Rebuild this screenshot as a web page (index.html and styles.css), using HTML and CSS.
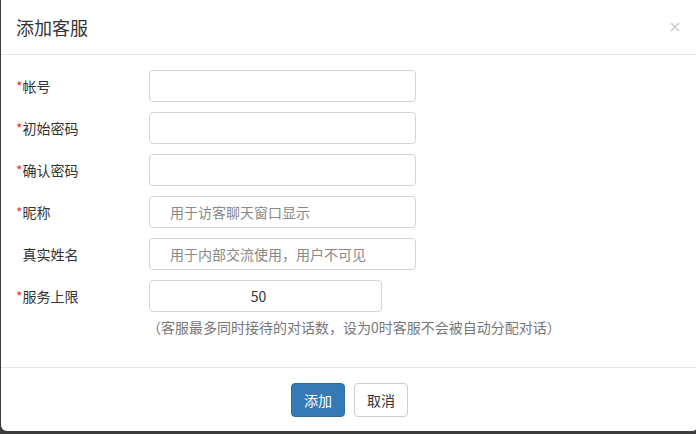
FILE: index.html
```html
<!DOCTYPE html>
<html lang="zh-CN">
<head>
    <meta charset="UTF-8">
    <title>添加客服</title>
    <link rel="stylesheet" href="styles.css">
</head>
<body>
    <div class="modal">
        <div class="modal-header">
            <h4 class="modal-title">添加客服</h4>
            <button class="close" type="button" aria-label="Close">
                <svg width="10" height="10" viewBox="0 0 10 10"><path d="M1 1L9 9M9 1L1 9" stroke="#c9c9c9" stroke-width="1.6" fill="none"/></svg>
            </button>
        </div>

        <div class="modal-body">
            <div class="form-row">
                <label class="form-label"><span class="req">*</span>帐号</label>
                <input class="form-input" type="text">
            </div>
            <div class="form-row">
                <label class="form-label"><span class="req">*</span>初始密码</label>
                <input class="form-input" type="password">
            </div>
            <div class="form-row">
                <label class="form-label"><span class="req">*</span>确认密码</label>
                <input class="form-input" type="password">
            </div>
            <div class="form-row">
                <label class="form-label"><span class="req">*</span>昵称</label>
                <input class="form-input" type="text" placeholder="用于访客聊天窗口显示">
            </div>
            <div class="form-row">
                <label class="form-label"><span class="req hidden">*</span>真实姓名</label>
                <input class="form-input" type="text" placeholder="用于内部交流使用，用户不可见">
            </div>
            <div class="form-row">
                <label class="form-label"><span class="req">*</span>服务上限</label>
                <input class="form-input short" type="text" value="50">
            </div>
            <p class="help">（客服最多同时接待的对话数，设为0时客服不会被自动分配对话）</p>
        </div>

        <div class="modal-footer">
            <button class="btn btn-primary" type="button">添加</button>
            <button class="btn btn-default" type="button">取消</button>
        </div>
    </div>
</body>
</html>
```

FILE: styles.css
```css
/* General Styles */
body {
    margin: 0;
    background-color: #3b3b3b;
    font-family: "Noto Sans CJK SC", "Liberation Sans", sans-serif;
    font-size: 14px;
    color: #333;
    overflow: hidden;
}

.modal {
    width: 697px;
    height: 431px;
    margin-left: 1px;
    background-color: #fff;
    border-radius: 0 0 6px 6px;
    display: flex;
    flex-direction: column;
}

/* Header */
.modal-header {
    height: 54px;
    border-bottom: 1px solid #e5e5e5;
    padding: 0 16px 0 15px;
    display: flex;
    align-items: center;
    justify-content: space-between;
}

.modal-title {
    margin: 0;
    font-size: 18px;
    font-weight: normal;
    line-height: 24px;
    color: #333;
}

.close {
    border: 0;
    background: none;
    padding: 0;
    margin-right: 2px;
    margin-top: -1px;
    width: 10px;
    height: 10px;
    display: flex;
}

/* Body */
.modal-body {
    height: 312px;
    box-sizing: border-box;
    padding: 15px 15px 0;
    display: flex;
    flex-direction: column;
    gap: 10px;
}

.form-row {
    display: flex;
    align-items: center;
    height: 32px;
}

.form-label {
    width: 133px;
    flex-shrink: 0;
    color: #333;
}

.req {
    color: #e33;
}

.req.hidden {
    visibility: hidden;
}

.form-input {
    width: 267px;
    height: 32px;
    box-sizing: border-box;
    border: 1px solid #d4d4d4;
    border-radius: 4px;
    padding: 0 20px;
    font-family: inherit;
    font-size: 14px;
    color: #333;
    outline: none;
}

.form-input::placeholder {
    color: #888;
}

.form-input.short {
    width: 233px;
    text-align: center;
    padding: 0 30px 0 16px;
}

.help {
    margin: -5px 0 0 131px;
    line-height: 20px;
    color: #777;
}

/* Footer */
.modal-footer {
    flex: 1;
    border-top: 1px solid #e5e5e5;
    display: flex;
    justify-content: center;
    align-items: center;
    gap: 9px;
}

.btn {
    width: 54px;
    height: 34px;
    border-radius: 4px;
    font-family: inherit;
    font-size: 14px;
    padding: 0;
}

.btn-primary {
    background-color: #337ab7;
    border: 1px solid #2e6da4;
    color: #fff;
}

.btn-default {
    background-color: #fff;
    border: 1px solid #ccc;
    color: #333;
}
```
